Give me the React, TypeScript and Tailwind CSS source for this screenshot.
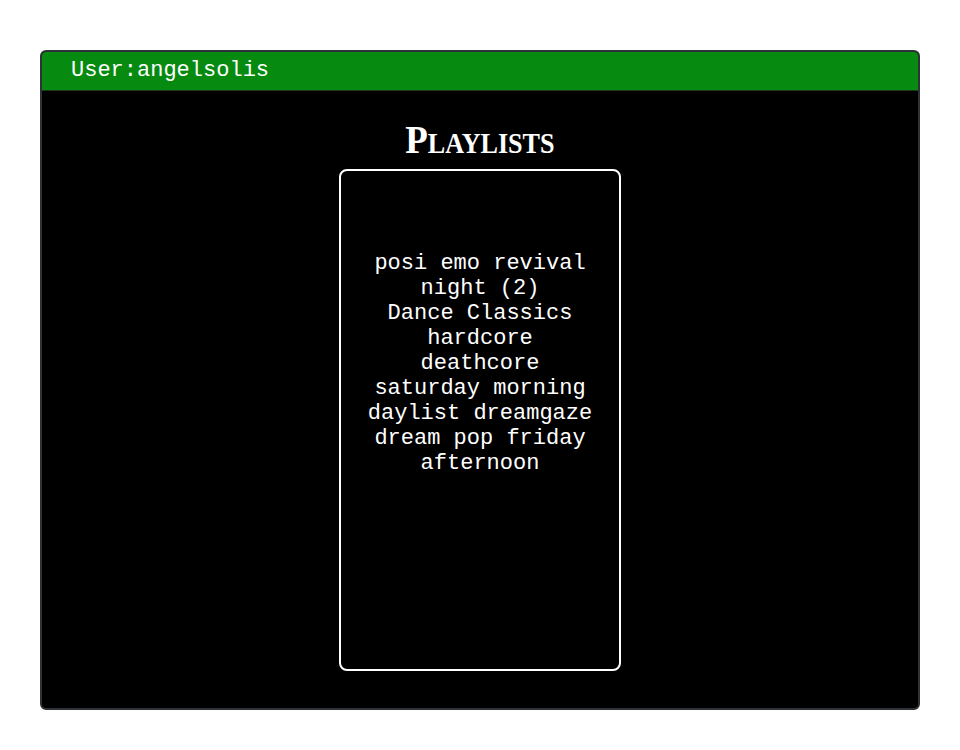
const playlists = [
  "posi emo revival night (2)",
  "Dance Classics",
  "hardcore",
  "deathcore",
  "saturday morning",
  "daylist dreamgaze",
  "dream pop friday afternoon",
];

export default function App() {
  return (
    <div className="min-h-screen bg-white pt-[50px] px-[40px]">
      <div className="h-[660px] rounded-md border-2 border-[#2e3236] bg-black overflow-hidden flex flex-col">
        {/* header */}
        <div className="h-[39px] bg-[#068a0f] flex items-center pl-[29px] border-b border-[#1d3a1f]">
          <span className="text-white text-[22px] font-['Liberation_Mono',monospace] -mt-[2px]">User:angelsolis</span>
        </div>

        <div className="flex flex-col items-center">
          <h1 className="mt-[24px] text-white text-[41px] leading-[48px] font-bold [font-variant:small-caps] font-['Liberation_Serif',serif] scale-x-[0.9]">
            Playlists
          </h1>
          <div className="mt-[6px] w-[282px] h-[502px] rounded-lg border-2 border-white px-[24px] pt-[80px]">
            {playlists.map((p) => (
              <p key={p} className="text-white text-center text-[22px] leading-[25px] font-['Liberation_Mono',monospace]">
                {p}
              </p>
            ))}
          </div>
        </div>
      </div>
    </div>
  );
}
